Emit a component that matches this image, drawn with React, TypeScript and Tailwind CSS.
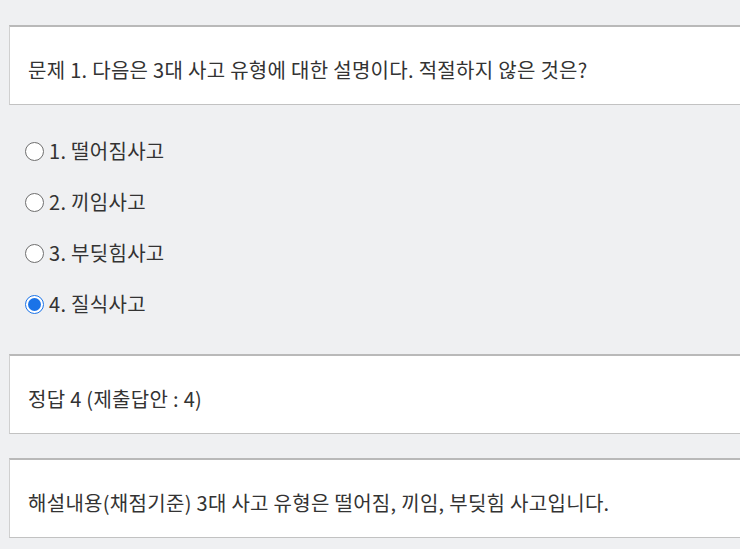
import {useState} from "react";

const FONT = "font-['Malgun_Gothic','Noto_Sans_CJK_KR',sans-serif]";

const options = [
    {id: 1, label: "1. 떨어짐사고"},
    {id: 2, label: "2. 끼임사고"},
    {id: 3, label: "3. 부딪힘사고"},
    {id: 4, label: "4. 질식사고"},
];

const Panel = ({children}: {children: React.ReactNode}) => (
    <div className="ml-[9px] box-border h-[80px] border-t-2 border-b border-l border-t-[#b9b9b9] border-b-[#c2c2c2] border-l-[#d0d0d0] bg-white pt-[29px] pl-[18px]">
        <p className="text-[20px] leading-[28px] tracking-[0.3px] text-[#333]">{children}</p>
    </div>
);

const Radio = ({checked}: {checked: boolean}) =>
    checked ? (
        <span className="flex h-[19px] w-[19px] items-center justify-center rounded-full border border-[#1a73e8] bg-white">
            <span className="h-[13px] w-[13px] rounded-full bg-[#1a73e8]" />
        </span>
    ) : (
        <span className="h-[19px] w-[19px] rounded-full border border-[#6f6f6f] bg-white" />
    );

export default function App() {
    const [selected, setSelected] = useState(4);

    return (
        <main className={`${FONT} min-h-[549px] w-[740px] overflow-hidden bg-[#eff0f2] pt-[25px]`}>
            <Panel>문제 1. 다음은 3대 사고 유형에 대한 설명이다. 적절하지 않은 것은?</Panel>

            <ul className="flex flex-col gap-[25px] pt-[33px] pb-[37px] pl-[25px]">
                {options.map(o => (
                    <li key={o.id} className="flex h-[26px] cursor-pointer items-center gap-[5px]" onClick={() => setSelected(o.id)}>
                        <Radio checked={selected === o.id} />
                        <span className="text-[20px] leading-[26px] tracking-[0.3px] text-[#333]">{o.label}</span>
                    </li>
                ))}
            </ul>

            <Panel>정답 4 (제출답안 : 4)</Panel>
            <div className="h-[24px]" />
            <Panel>해설내용(채점기준) 3대 사고 유형은 떨어짐, 끼임, 부딪힘 사고입니다.</Panel>
        </main>
    );
}
